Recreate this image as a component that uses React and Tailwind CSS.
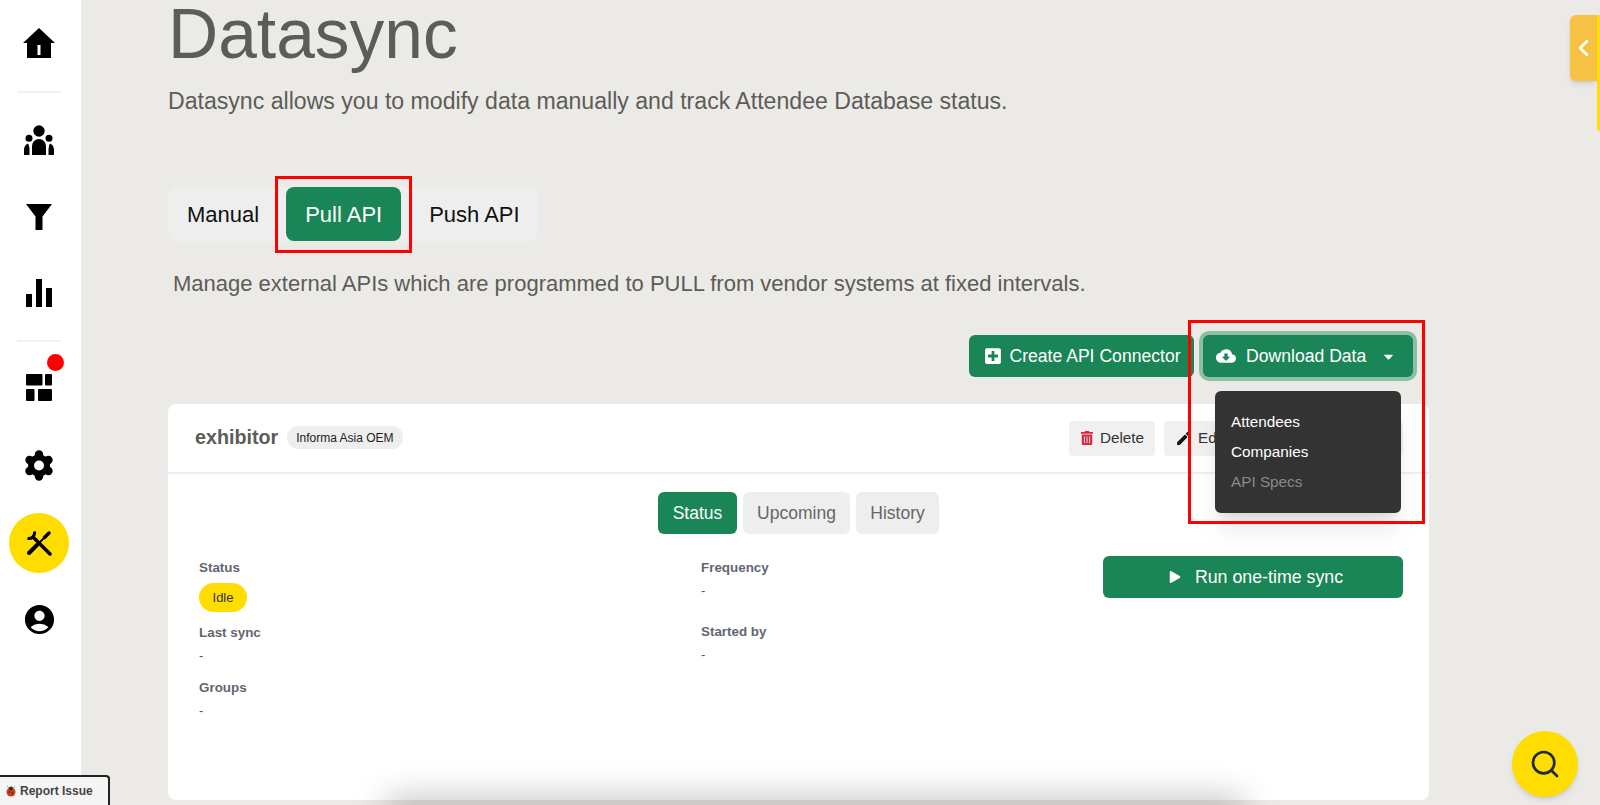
import { FaCaretDown, FaPlay, FaPlusSquare, FaTrashAlt } from "react-icons/fa";
import { MdAccountCircle, MdCloudDownload, MdEdit } from "react-icons/md";
import { ChevronLeft, Search } from "lucide-react";

function HomeIcon() {
  return (
    <svg viewBox="0 0 32 30" className="h-[30px] w-8 fill-black">
      <path d="M16 0 32 15h-4v15H4V15H0zM14.500 17v10h3V17z" fillRule="evenodd" />
    </svg>
  );
}

function GroupIcon() {
  return (
    <svg viewBox="0 0 30 30" className="h-[30px] w-[30px] fill-black">
      <circle cx="15" cy="6" r="5.700" />
      <circle cx="5" cy="13.200" r="3.500" />
      <circle cx="25" cy="13.200" r="3.500" />
      <path d="M8 30v-9a7 7 0 0 1 14 0v9z" />
      <path d="M0 30v-5c0-3 1.500-5.500 4-6.500C5 20 5.500 23 5.500 25v5z" />
      <path d="M30 30v-5c0-3-1.500-5.500-4-6.500C25 20 24.500 23 24.500 25v5z" />
    </svg>
  );
}

function FilterIcon() {
  return (
    <svg viewBox="0 0 28 28" className="h-7 w-7 fill-black">
      <path d="M1 1h26L17.500 13.500V27h-7V13.500z" />
    </svg>
  );
}

function ChartIcon() {
  return (
    <svg viewBox="0 0 26 28" className="h-7 w-[26px] fill-black">
      <path d="M0 15h6v13H0zM10 0h6v28h-6zM20 9h6v19h-6z" />
    </svg>
  );
}

function BoardIcon() {
  return (
    <svg viewBox="0 0 26 27" className="h-[27px] w-[26px] fill-black">
      <rect x="0" y="0" width="16.500" height="11.500" rx="1" />
      <rect x="19" y="0" width="7" height="11.500" rx="1" />
      <rect x="0" y="15" width="8.500" height="12" rx="1" />
      <rect x="12" y="15" width="14" height="12" rx="1" />
    </svg>
  );
}

function GearIcon() {
  return (
    <svg viewBox="0 0 28 31" className="h-[31px] w-7">
      <circle cx="14" cy="15.500" r="11" fill="#000" />
      <circle cx="14" cy="4.500" r="4.200" fill="#000" />
      <circle cx="14" cy="26.500" r="4.200" fill="#000" />
      <circle cx="4.500" cy="10" r="4.200" fill="#000" />
      <circle cx="23.500" cy="10" r="4.200" fill="#000" />
      <circle cx="4.500" cy="21" r="4.200" fill="#000" />
      <circle cx="23.500" cy="21" r="4.200" fill="#000" />
      <circle cx="14" cy="15.500" r="5" fill="#fff" />
    </svg>
  );
}

function ToolsIcon() {
  return (
    <svg viewBox="0 0 26 26" className="h-[26px] w-[26px]" fill="none" stroke="#000">
      <path d="M8.500 1.500A6 6 0 0 1 1.500 8.500" strokeWidth="3" />
      <path d="M8 8 24 24" strokeWidth="3.500" strokeLinecap="round" />
      <path d="M3 23 11 15" strokeWidth="4" strokeLinecap="round" />
      <path d="M11 15 18 8" strokeWidth="1.800" />
      <path d="M18.500 7.500 23 3" strokeWidth="3.500" strokeLinecap="round" />
    </svg>
  );
}

function BugIcon() {
  return (
    <svg viewBox="0 0 12 12" className="h-3 w-3">
      <path d="M2 1l2 2M10 1 8 3" stroke="#777" strokeWidth=".7" />
      <circle cx="6" cy="7" r="4.500" fill="#c9401c" />
      <circle cx="6" cy="3.500" r="2" fill="#3b2a20" />
      <circle cx="4.500" cy="7" r=".8" fill="#2b1a10" />
      <circle cx="7.500" cy="8" r=".8" fill="#2b1a10" />
    </svg>
  );
}

function NavIcon({ className, children }) {
  return <div className={`flex items-center justify-center ${className}`}>{children}</div>;
}

function Field({ label, className, children }) {
  return (
    <div className={className}>
      <div className="text-[13.400px] leading-4 font-bold text-[#5f6670]">{label}</div>
      {children}
    </div>
  );
}

export default function App() {
  return (
    <div className="relative flex h-[805px] overflow-hidden bg-[#eceae6] font-['Liberation_Sans',Arial,sans-serif]">
      <aside className="flex w-[81px] shrink-0 flex-col items-center bg-white pr-[3px]">
        <NavIcon className="mt-[28px] h-[30px]"><HomeIcon /></NavIcon>
        <div className="mt-[33px] h-[2px] w-11 bg-[#f3f1ec]" />
        <NavIcon className="mt-[30px] h-[34px]"><GroupIcon /></NavIcon>
        <NavIcon className="mt-[46px] h-7"><FilterIcon /></NavIcon>
        <NavIcon className="mt-[48px] h-7"><ChartIcon /></NavIcon>
        <div className="mt-[33px] h-[2px] w-11 bg-[#f3f1ec]" />
        <div className="relative mt-[32px]">
          <BoardIcon />
          <span className="absolute -top-[20px] left-[21px] h-[17px] w-[17px] rounded-full bg-[#ff0000]" />
        </div>
        <NavIcon className="mt-[48px] h-8"><GearIcon /></NavIcon>
        <NavIcon className="mt-[32px] h-[60px] w-[60px] rounded-full bg-[#ffdd00]"><ToolsIcon /></NavIcon>
        <NavIcon className="mt-[29px] h-[34px]"><MdAccountCircle className="text-[35px] text-black" /></NavIcon>
      </aside>

      <main className="min-w-0 flex-1 pl-[87px] pr-[171px]">
        <h1 className="text-[69.500px] leading-[68px] text-[#5c5c58]">Datasync</h1>
        <p className="mt-[18px] text-[23.100px] leading-[30px] text-[#5c5c58]">Datasync allows you to modify data manually and track Attendee Database status.</p>

        <div className="mt-[71px] flex h-[54px] w-[369px] items-center rounded-lg bg-[#eeeeee] text-[22px] text-[#111111]">
          <span className="pl-[19px]">Manual</span>
          <span className="ml-[27px] flex h-[54px] w-[115px] items-center justify-center rounded-lg bg-[#1a8556] text-white">Pull API</span>
          <span className="ml-[28px]">Push API</span>
        </div>

        <p className="mt-[31px] pl-[5px] text-[22px] leading-[24px] text-[#5c5c58]">Manage external APIs which are programmed to PULL from vendor systems at fixed intervals.</p>

        <div className="mt-[39px] flex justify-end gap-[9px] pr-[16px] text-[17.600px] text-white">
          <button className="flex h-[42px] w-[225px] items-center justify-center gap-[7px] rounded-md bg-[#1a8556] pl-[2px]">
            <FaPlusSquare className="text-[18px]" />
            Create API Connector
          </button>
          <button className="flex h-[42px] w-[210px] items-center rounded-md bg-[#1a8556] pl-[13px] ring-4 ring-[#8cbfa5]">
            <MdCloudDownload className="text-[20px]" />
            <span className="ml-[10px]">Download Data</span>
            <FaCaretDown className="ml-[15px] text-[15px]" />
          </button>
        </div>

        <section className="relative mt-[27px] h-[396px] rounded-lg bg-white">
          <div className="flex h-[70px] items-center justify-between border-b-2 border-[#eceef0] pr-[26px] pl-[27px]">
            <div className="flex items-center gap-[9px]">
              <span className="text-[19.700px] font-bold text-[#5c5c58]">exhibitor</span>
              <span className="flex h-[23px] items-center rounded-full bg-[#eeeeee] px-[9px] text-[12px] text-[#222222]">Informa Asia OEM</span>
            </div>
            <div className="flex gap-[9px] text-[15.300px] text-[#333333]">
              <button className="flex h-[35px] w-[86px] items-center justify-center gap-[6px] rounded bg-[#f0f0f0]">
                <FaTrashAlt className="text-[14px] text-[#dc2743]" />
                Delete
              </button>
              <button className="flex h-[35px] w-[239px] items-center gap-[6px] rounded bg-[#f0f0f0] pl-[11px]">
                <MdEdit className="text-[17px] text-[#111111]" />
                Edit
              </button>
            </div>
          </div>

          <div className="mt-[18px] flex justify-center gap-[6px] text-[17.500px]">
            <span className="flex h-[42px] w-[79px] items-center justify-center rounded-md bg-[#1a8556] text-white">Status</span>
            <span className="flex h-[42px] w-[107px] items-center justify-center rounded-md bg-[#eeeeee] text-[#666666]">Upcoming</span>
            <span className="flex h-[42px] w-[83px] items-center justify-center rounded-md bg-[#eeeeee] text-[#666666]">History</span>
          </div>

          <div className="mt-[26px] flex pr-[26px] pl-[31px]">
            <div className="w-[502px]">
              <Field label="Status">
                <span className="mt-[7px] flex h-[29px] w-[48px] items-center justify-center rounded-full bg-[#ffdd00] text-[13px] text-[#333333]">Idle</span>
              </Field>
              <Field label="Last sync" className="mt-[13px]"><div className="mt-[7px] text-[13px] leading-4 text-[#555555]">-</div></Field>
              <Field label="Groups" className="mt-[16px]"><div className="mt-[7px] text-[13px] leading-4 text-[#555555]">-</div></Field>
            </div>
            <div className="w-[402px]">
              <Field label="Frequency"><div className="mt-[7px] text-[13px] leading-4 text-[#555555]">-</div></Field>
              <Field label="Started by" className="mt-[25px]"><div className="mt-[7px] text-[13px] leading-4 text-[#555555]">-</div></Field>
            </div>
            <button className="-mt-[4px] flex h-[42px] w-[300px] items-center justify-center gap-[14px] rounded-md bg-[#1a8556] pl-[6px] text-[17.800px] text-white">
              <FaPlay className="text-[12px]" />
              Run one-time sync
            </button>
          </div>

          {/* dropdown menu, open over the card */}
          <div className="absolute top-[-13px] left-[1047px] z-10 flex h-[122px] w-[186px] flex-col rounded-md bg-[#333333] pt-[16px] pl-[16px] text-[15.300px] leading-[30px] text-white shadow-xl">
            <span>Attendees</span>
            <span>Companies</span>
            <span className="text-[#8a8a8a]">API Specs</span>
          </div>
        </section>
      </main>

      {/* annotation boxes on the screenshot */}
      <div className="absolute top-[176px] left-[275px] h-[77px] w-[137px] border-[3px] border-[#ff0000]" />
      <div className="absolute top-[320px] left-[1188px] z-20 h-[204px] w-[237px] border-[3px] border-[#ff0000]" />

      <div className="absolute bottom-[-14px] left-[385px] h-[20px] w-[860px] rounded-full bg-black/30 blur-lg" />

      <div className="absolute top-[15px] right-[3px] flex h-[66px] w-[27px] items-center justify-center rounded-l-md bg-[#f6c244] shadow-md">
        <ChevronLeft className="h-8 w-8 text-white" strokeWidth={2.500} />
      </div>
      <div className="absolute top-[15px] right-0 h-[116px] w-[3px] rounded-bl-md bg-[#ffdd00]" />

      <button className="absolute right-[22px] bottom-[8px] flex h-[66px] w-[66px] items-center justify-center rounded-full bg-[#ffdd00] shadow-md">
        <Search className="h-[32px] w-[32px] text-[#1f2937]" strokeWidth={2} />
      </button>

      <div className="absolute bottom-0 left-0 flex h-[30px] w-[110px] items-center gap-[3px] rounded-tr-sm border-t-2 border-r-2 border-[#222222] bg-[#f5f5f5] pl-[5px] text-[12px] font-bold text-[#444444]">
        <BugIcon />
        Report Issue
      </div>
    </div>
  );
}
